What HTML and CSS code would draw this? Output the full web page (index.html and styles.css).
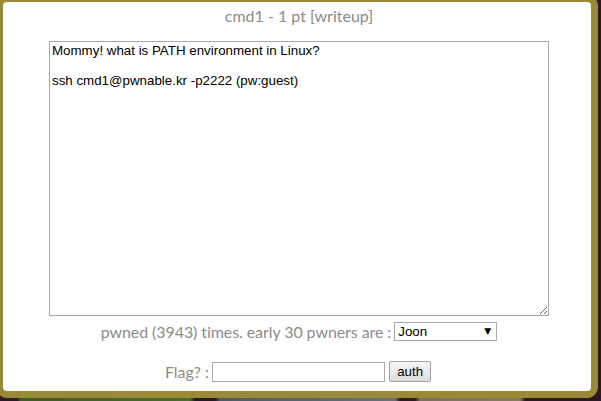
FILE: index.html
```html
<!DOCTYPE html>
<html>
<head>
<meta charset="utf-8">
<link rel="stylesheet" href="styles.css">
</head>
<body>
<div class="modal">
  <div class="title">cmd1 - 1 pt [writeup]</div>
  <textarea class="desc">Mommy! what is PATH environment in Linux?

ssh cmd1@pwnable.kr -p2222 (pw:guest)</textarea>
  <div class="pwned-row">
    <span class="label label-tight">pwned (3943) times. early 30 pwners are :</span>
    <span class="select-wrap">
      <select class="pwners"><option>Joon</option></select>
    </span>
  </div>
  <div class="flag-row">
    <span class="label">Flag? :</span>
    <input class="flag-input" type="text">
    <button class="auth-btn">auth</button>
  </div>
</div>
</body>
</html>
```

FILE: styles.css
```css
html, body {
  margin: 0;
  padding: 0;
  width: 601px;
  height: 401px;
  overflow: hidden;
}
body {
  background:
    linear-gradient(90deg, #2a1a2a 0px, #2a1a2a 18px, #3f5a2a 20px, #4a6a30 190px, #241828 195px, #241828 215px, #4a5a6a 220px, #6a7078 395px, #2a1a26 400px, #2a1a26 415px, #7a7060 420px, #8a7a60 520px, #2a1a26 525px, #2a1a26 601px);
}
.modal {
  box-sizing: border-box;
  width: 602px;
  height: 403px;
  margin: -5px 0 0 -4px;
  border: 7px solid #9a8a35;
  border-radius: 11px;
  background: #fff;
  padding-left: 4px;
  text-align: center;
  font-family: Lato, "Open Sans", sans-serif;
  color: #8c8c8c;
}
.title {
  padding-top: 4px;
  font-size: 16px;
  line-height: 19px;
}
.desc {
  display: block;
  box-sizing: border-box;
  width: 500px;
  height: 275px;
  margin: 16px auto 0;
  padding: 1px 2px;
  border: 1px solid #a9a9a9;
  font-family: "Liberation Sans", Arial, sans-serif;
  font-size: 13.33px;
  line-height: 15px;
  color: #000;
  background: #fff;
  resize: both;
  outline: none;
}
.pwned-row {
  display: flex;
  justify-content: center;
  align-items: center;
  gap: 3px;
  margin-top: 6px;
  height: 19px;
}
.label {
  font-size: 16px;
  line-height: 19px;
  color: #8c8c8c;
}
.label-tight {
  letter-spacing: -0.08px;
}
.select-wrap {
  position: relative;
  display: inline-block;
  width: 103px;
  height: 19px;
}
.select-wrap::after {
  content: "▼";
  position: absolute;
  right: 6px;
  top: 3px;
  font-size: 9px;
  line-height: 12px;
  color: #000;
  font-family: "DejaVu Sans", sans-serif;
  pointer-events: none;
}
.pwners {
  appearance: none;
  -webkit-appearance: none;
  box-sizing: border-box;
  width: 103px;
  height: 19px;
  margin: 0;
  padding: 0 3px;
  border: 1px solid #a9a9a9;
  border-radius: 0;
  background: #fff;
  font-family: "Liberation Sans", Arial, sans-serif;
  font-size: 13.33px;
  color: #000;
  display: block;
}
.flag-row {
  display: flex;
  justify-content: center;
  align-items: center;
  gap: 3px;
  margin-top: 20px;
  margin-right: 2px;
  height: 21px;
}
.flag-input {
  box-sizing: border-box;
  width: 173px;
  height: 20px;
  margin: 0;
  padding: 0 2px;
  border: 1px solid #a9a9a9;
  background: #fff;
}
.auth-btn {
  box-sizing: border-box;
  width: 42px;
  height: 21px;
  margin: 0 0 0 1px;
  padding: 0;
  border: 1px solid #a0a0a0;
  border-radius: 2px;
  background: linear-gradient(#f6f6f6, #dedede);
  font-family: "Liberation Sans", Arial, sans-serif;
  font-size: 13.33px;
  color: #000;
}
```
